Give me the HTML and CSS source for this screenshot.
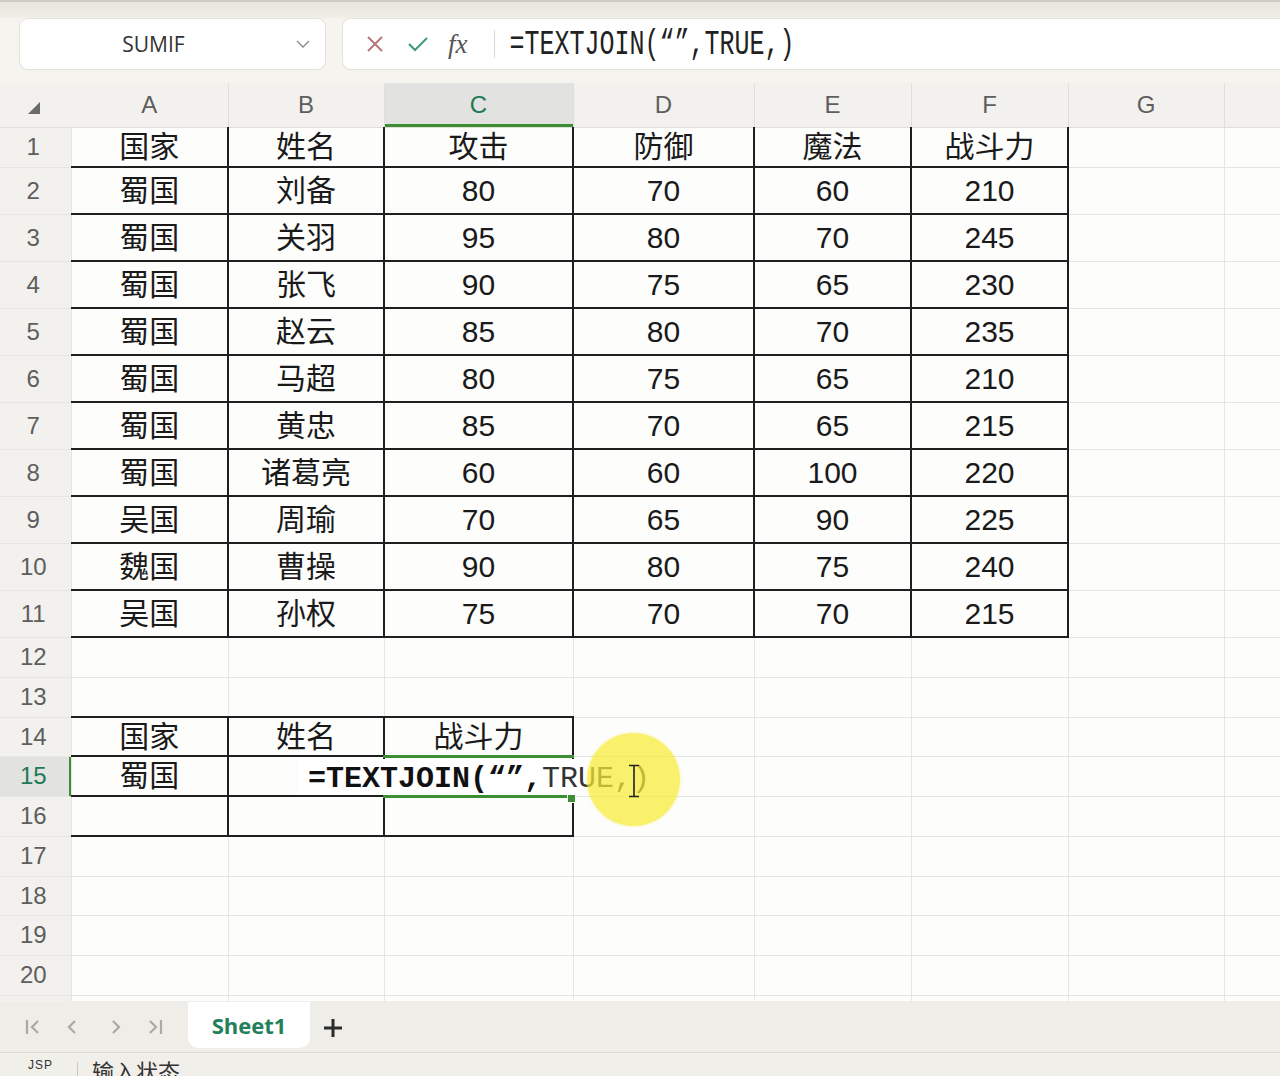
FILE: index.html
```html
<!DOCTYPE html>
<html lang="zh">
<head>
<meta charset="utf-8">
<title>Sheet1</title>
<link rel="stylesheet" href="styles.css">
</head>
<body>
<div class="topbar">
  <div class="namebox">
    <span class="name">SUMIF</span>
    <svg class="chev" width="16" height="16" viewBox="0 0 16 16"><path d="M2 5 L8 11 L14 5" fill="none" stroke="#8a8a8a" stroke-width="1.4"/></svg>
  </div>
  <div class="fxbox">
    <svg class="ic-x" width="18" height="18" viewBox="0 0 18 18"><path d="M2 2 L16 16 M16 2 L2 16" stroke="#b8777c" stroke-width="2" fill="none"/></svg>
    <svg class="ic-ok" width="22" height="18" viewBox="0 0 22 18"><path d="M2 9 L8 15 L20 3" stroke="#3e9a7e" stroke-width="2" fill="none"/></svg>
    <span class="fx">fx</span>
    <span class="sep"></span>
    <span class="ftext">=TEXTJOIN(“”,TRUE,)</span>
  </div>
</div>

<div class="sheet">
  <table class="grid">
    <colgroup>
      <col class="w-rh"><col class="w-a"><col class="w-b"><col class="w-c"><col class="w-d"><col class="w-e"><col class="w-f"><col class="w-g"><col class="w-h">
    </colgroup>
    <tr class="h-hd">
      <th class="corner"><svg width="14" height="14" viewBox="0 0 14 14"><path d="M13 1 L13 13 L1 13 Z" fill="#6b6b6b"/></svg></th>
      <th class="col">A</th><th class="col">B</th><th class="col sel">C</th><th class="col">D</th><th class="col">E</th><th class="col">F</th><th class="col">G</th><th class="col"></th>
    </tr>
    <tr class="h40"><th class="row">1</th><td class="k nt nl">国家</td><td class="k nt">姓名</td><td class="k nt">攻击</td><td class="k nt">防御</td><td class="k nt">魔法</td><td class="k nt">战斗力</td><td></td><td></td></tr>
    <tr class="h47"><th class="row">2</th><td class="k nl">蜀国</td><td class="k">刘备</td><td class="k">80</td><td class="k">70</td><td class="k">60</td><td class="k">210</td><td></td><td></td></tr>
    <tr class="h47"><th class="row">3</th><td class="k nl">蜀国</td><td class="k">关羽</td><td class="k">95</td><td class="k">80</td><td class="k">70</td><td class="k">245</td><td></td><td></td></tr>
    <tr class="h47"><th class="row">4</th><td class="k nl">蜀国</td><td class="k">张飞</td><td class="k">90</td><td class="k">75</td><td class="k">65</td><td class="k">230</td><td></td><td></td></tr>
    <tr class="h47"><th class="row">5</th><td class="k nl">蜀国</td><td class="k">赵云</td><td class="k">85</td><td class="k">80</td><td class="k">70</td><td class="k">235</td><td></td><td></td></tr>
    <tr class="h47"><th class="row">6</th><td class="k nl">蜀国</td><td class="k">马超</td><td class="k">80</td><td class="k">75</td><td class="k">65</td><td class="k">210</td><td></td><td></td></tr>
    <tr class="h47"><th class="row">7</th><td class="k nl">蜀国</td><td class="k">黄忠</td><td class="k">85</td><td class="k">70</td><td class="k">65</td><td class="k">215</td><td></td><td></td></tr>
    <tr class="h47"><th class="row">8</th><td class="k nl">蜀国</td><td class="k">诸葛亮</td><td class="k">60</td><td class="k">60</td><td class="k">100</td><td class="k">220</td><td></td><td></td></tr>
    <tr class="h47"><th class="row">9</th><td class="k nl">吴国</td><td class="k">周瑜</td><td class="k">70</td><td class="k">65</td><td class="k">90</td><td class="k">225</td><td></td><td></td></tr>
    <tr class="h47"><th class="row">10</th><td class="k nl">魏国</td><td class="k">曹操</td><td class="k">90</td><td class="k">80</td><td class="k">75</td><td class="k">240</td><td></td><td></td></tr>
    <tr class="h47"><th class="row">11</th><td class="k nl">吴国</td><td class="k">孙权</td><td class="k">75</td><td class="k">70</td><td class="k">70</td><td class="k">215</td><td></td><td></td></tr>
    <tr class="h40"><th class="row">12</th><td></td><td></td><td></td><td></td><td></td><td></td><td></td><td></td></tr>
    <tr class="h40"><th class="row">13</th><td></td><td></td><td></td><td></td><td></td><td></td><td></td><td></td></tr>
    <tr class="h39"><th class="row">14</th><td class="k nl">国家</td><td class="k">姓名</td><td class="k">战斗力</td><td></td><td></td><td></td><td></td><td></td></tr>
    <tr class="h40"><th class="row sel">15</th><td class="k nl">蜀国</td><td class="k"></td><td class="k"></td><td></td><td></td><td></td><td></td><td></td></tr>
    <tr class="h40"><th class="row">16</th><td class="k nl"></td><td class="k"></td><td class="k"></td><td></td><td></td><td></td><td></td><td></td></tr>
    <tr class="h40"><th class="row">17</th><td></td><td></td><td></td><td></td><td></td><td></td><td></td><td></td></tr>
    <tr class="h39"><th class="row">18</th><td></td><td></td><td></td><td></td><td></td><td></td><td></td><td></td></tr>
    <tr class="h40"><th class="row">19</th><td></td><td></td><td></td><td></td><td></td><td></td><td></td><td></td></tr>
    <tr class="h40"><th class="row">20</th><td></td><td></td><td></td><td></td><td></td><td></td><td></td><td></td></tr>
    <tr class="h40"><th class="row"></th><td></td><td></td><td></td><td></td><td></td><td></td><td></td><td></td></tr>
  </table>

  <div class="selbox"></div>
  <div class="handle"></div>
  <div class="editor"><b>=TEXTJOIN(“”,</b><span class="lite">TRUE,)</span></div>
  <div class="spot"></div>
  <svg class="ibeam" width="12" height="34" viewBox="0 0 12 34"><path d="M1 1.5 H11 M6 1.5 V32.5 M1 32.5 H11" stroke="#222" stroke-width="1.6" fill="none"/></svg>
</div>

<div class="tabbar">
  <div class="nav">
    <svg width="20" height="20" viewBox="0 0 20 20"><path d="M4 3 V17 M15 4 L9 10 L15 16" stroke="#a9a9a9" stroke-width="2.2" fill="none"/></svg>
    <svg width="20" height="20" viewBox="0 0 20 20"><path d="M13 4 L7 10 L13 16" stroke="#a9a9a9" stroke-width="2.2" fill="none"/></svg>
    <svg class="nav-next" width="20" height="20" viewBox="0 0 20 20"><path d="M7 4 L13 10 L7 16" stroke="#a9a9a9" stroke-width="2.2" fill="none"/></svg>
    <svg width="20" height="20" viewBox="0 0 20 20"><path d="M5 4 L11 10 L5 16 M16 3 V17" stroke="#a9a9a9" stroke-width="2.2" fill="none"/></svg>
  </div>
  <div class="tab">Sheet1</div>
  <svg class="plus" width="22" height="22" viewBox="0 0 22 22"><path d="M11 2 V20 M2 11 H20" stroke="#2b2b2b" stroke-width="3" fill="none"/></svg>
</div>

<div class="status">
  <span class="ime">JSP</span>
  <span class="vsep"></span>
  <span class="state">输入状态</span>
</div>
</body>
</html>
```

FILE: styles.css
```css
html, body {
  margin: 0;
  padding: 0;
}
body {
  width: 1280px;
  height: 1076px;
  overflow: hidden;
  background: #f4f3ee;
  font-family: "Liberation Sans", "Noto Sans CJK SC", sans-serif;
}

/* ---------- top bar ---------- */
.topbar {
  box-sizing: border-box;
  height: 83px;
  border-top: 2px solid #cfcdc8;
  padding: 17px 0 0 20px;
  display: flex;
  align-items: flex-start;
  gap: 18px;
  background: linear-gradient(#e9e7dd 0, #edebe3 14px, #f5f4ef 17px, #f5f4ef 100%);
}
.namebox {
  width: 305px;
  height: 50px;
  background: #fff;
  border-radius: 8px;
  box-shadow: 0 0 0 1px #e4e2da, 0 1px 2px rgba(0,0,0,0.05);
  display: flex;
  align-items: center;
}
.namebox .name {
  flex: 1;
  text-align: center;
  padding-right: 8px;
  font-size: 21px;
  color: #333;
  font-family: "Open Sans", "Liberation Sans", sans-serif;
}
.namebox .chev {
  margin-right: 14px;
}
.fxbox {
  flex: 1;
  height: 50px;
  background: #fff;
  border-radius: 8px 0 0 8px;
  box-shadow: 0 0 0 1px #e4e2da, 0 1px 2px rgba(0,0,0,0.05);
  display: flex;
  align-items: center;
  padding-left: 23px;
}
.ic-ok {
  margin-left: 23px;
}
.fx {
  margin-left: 19px;
  font-family: "Liberation Serif", serif;
  font-style: italic;
  font-size: 27px;
  color: #555;
  line-height: 1;
}
.sep {
  width: 1px;
  height: 28px;
  background: #d8d8d8;
  margin-left: 26px;
}
.ftext {
  display: inline-block;
  margin-left: 15px;
  font-family: "Liberation Mono", monospace;
  font-size: 25px;
  line-height: 1;
  color: #222;
  transform: scaleY(1.4);
  white-space: nowrap;
}

/* ---------- sheet ---------- */
.sheet {
  position: relative;
  height: 918px;
  overflow: hidden;
  background: #fdfdfc;
}
.grid {
  border-collapse: collapse;
  table-layout: fixed;
  width: 1280px;
}
.w-rh { width: 71px; }
.w-a { width: 157px; }
.w-b { width: 156px; }
.w-c { width: 189px; }
.w-d { width: 181px; }
.w-e { width: 157px; }
.w-f { width: 157px; }
.w-g { width: 156px; }
.w-h { width: 56px; }

.h-hd { height: 44px; }
.h40 { height: 40px; }
.h39 { height: 39px; }
.h47 { height: 47px; }

th {
  padding: 0;
  font-weight: normal;
  background: #f2f1ee;
  color: #5e5e5e;
  font-size: 24px;
  line-height: 1;
  text-align: center;
  vertical-align: middle;
}
th.col {
  border-right: 1px solid #dfded9;
  border-bottom: 1px solid #dfded9;
}
th.col.sel {
  background: #e2e2e0;
  color: #217a57;
  box-shadow: inset 0 -3px 0 #3b8f32;
}
th.corner {
  border-bottom: 1px solid #dfded9;
  text-align: left;
  padding-left: 27px;
  padding-top: 6px;
}
th.corner svg {
  display: block;
}
th.row {
  border-bottom: 1px solid #e7e6e2;
  padding-right: 4px;
}
th.row.sel {
  background: #e2e2e0;
  color: #217a57;
  box-shadow: inset -2px 0 0 #3b8f32;
}

td {
  padding: 0;
  border: 1px solid #e5e5e3;
  text-align: center;
  vertical-align: middle;
  font-size: 30px;
  line-height: 1;
  color: #1a1a1a;
  white-space: nowrap;
  overflow: hidden;
}
td.k {
  border: 2px solid #1f1f1f;
}
td.k.nt {
  border-top: 1px solid #e5e5e3;
}
td.k.nl {
  border-left: 1px solid #e5e5e3;
}

/* overlays on the active cell */
.selbox {
  position: absolute;
  left: 383px;
  top: 672px;
  width: 191px;
  height: 43px;
  box-sizing: border-box;
  border-top: 3px solid #3b8f32;
  border-bottom: 3px solid #3b8f32;
}
.handle {
  position: absolute;
  left: 567px;
  top: 711px;
  width: 7px;
  height: 7px;
  background: #3b8f32;
  border: 1px solid #fff;
}
.editor {
  position: absolute;
  left: 298px;
  top: 676px;
  width: 352px;
  height: 36px;
  box-sizing: border-box;
  padding-left: 10px;
  padding-top: 3px;
  background: #fff;
  display: flex;
  align-items: center;
  font-family: "Liberation Mono", monospace;
  font-size: 30px;
  line-height: 1;
  white-space: nowrap;
  color: #111;
}
.editor b {
  font-weight: bold;
}
.editor .lite {
  color: #333;
}
.spot {
  position: absolute;
  left: 587px;
  top: 650px;
  width: 93px;
  height: 93px;
  border-radius: 50%;
  background: rgba(246, 236, 52, 0.72);
  box-shadow: 0 0 3px rgba(246, 236, 52, 0.5);
}
.ibeam {
  position: absolute;
  left: 628px;
  top: 681px;
}

/* ---------- sheet tabs ---------- */
.tabbar {
  height: 51px;
  background: #efede8;
  display: flex;
  align-items: flex-start;
}
.nav {
  height: 52px;
  display: flex;
  align-items: center;
  padding-left: 23px;
  gap: 19px;
}
.nav svg {
  display: block;
}
.nav .nav-next {
  margin-left: 5px;
}
.tab {
  margin-left: 23px;
  margin-top: 1px;
  width: 122px;
  height: 46px;
  background: #fff;
  border-radius: 0 0 10px 10px;
  display: flex;
  align-items: center;
  justify-content: center;
  font-family: "Open Sans", "Liberation Sans", sans-serif;
  font-weight: 700;
  font-size: 22px;
  color: #24805a;
}
.plus {
  margin-left: 12px;
  margin-top: 16px;
}

/* ---------- status bar ---------- */
.status {
  box-sizing: border-box;
  height: 24px;
  border-top: 1px solid #dddbd5;
  background: #f0efea;
  display: flex;
  align-items: flex-start;
  overflow: hidden;
  color: #333;
}
.ime {
  margin-left: 28px;
  padding-top: 6px;
  font-size: 12px;
  line-height: 1;
  letter-spacing: 1px;
}
.vsep {
  width: 1px;
  height: 16px;
  margin-top: 9px;
  margin-left: 24px;
  background: #c8c6c0;
}
.state {
  margin-left: 14px;
  padding-top: 9px;
  font-size: 22px;
  line-height: 22px;
}
```
